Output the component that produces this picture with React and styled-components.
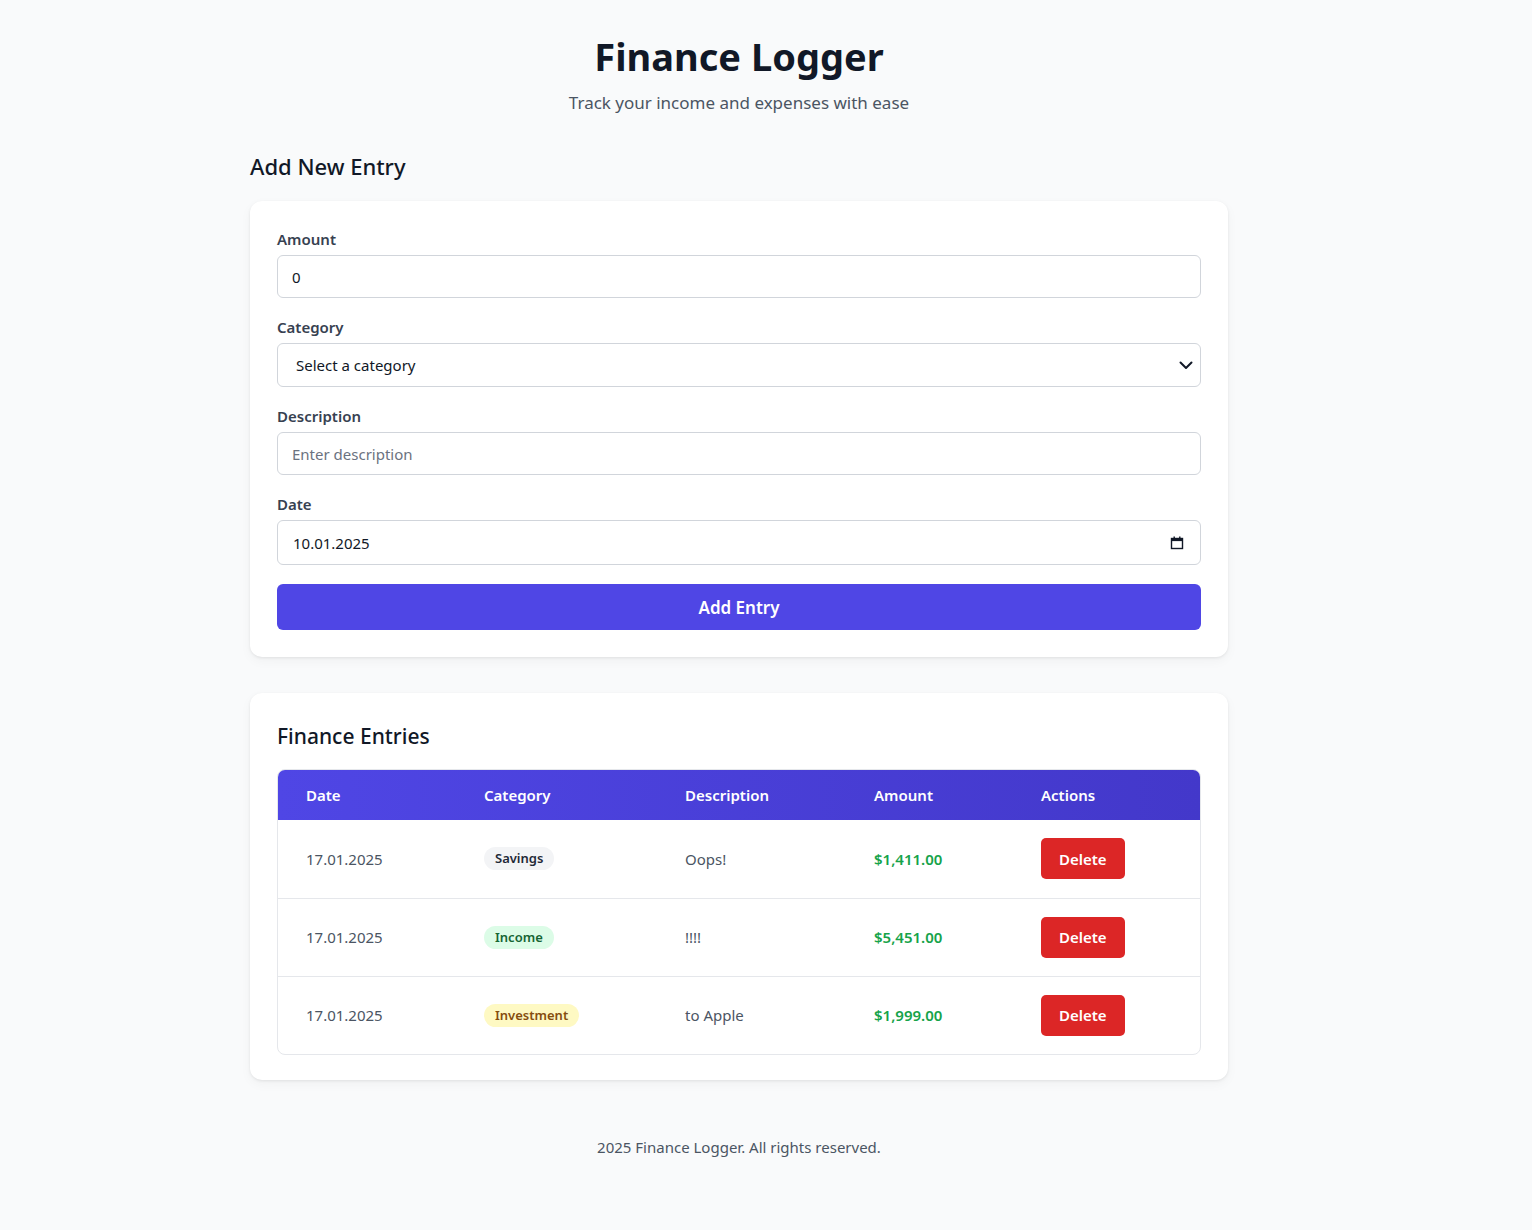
import React from 'react';
import styled, { createGlobalStyle } from 'styled-components';

const GlobalStyle = createGlobalStyle`
  html, body {
    margin: 0;
    padding: 0;
    background: #f9fafb;
    font-family: "Noto Sans", "Open Sans", sans-serif;
    color: #111827;
  }
  * { box-sizing: border-box; }
`;

const Page = styled.div`
  width: 1478px;
  min-height: 1230px;
  padding: 28px 0 60px;
`;

const Container = styled.div`
  width: 978px;
  margin: 0 auto;
`;

const Header = styled.header`
  text-align: center;
  margin-bottom: 36px;
`;

const Title = styled.h1`
  margin: 0;
  font-size: 38px;
  font-weight: 700;
  line-height: 56px;
  color: #111827;
`;

const Subtitle = styled.p`
  margin: 7px 0 0;
  font-size: 17px;
  color: #4b5563;
`;

const SectionTitle = styled.h2`
  margin: 0 0 ${p => p.$gap || 18}px;
  font-size: ${p => p.$size || 22}px;
  font-weight: 500;
  line-height: 32px;
  color: #111827;
`;

const Card = styled.section`
  background: #fff;
  border-radius: 12px;
  box-shadow: 0 1px 3px rgba(0,0,0,0.08), 0 4px 12px rgba(0,0,0,0.04);
  padding: ${p => p.$pad || '27px'};
  margin-bottom: 36px;
`;

const Field = styled.div`
  margin-bottom: 19px;
`;

const Label = styled.label`
  display: block;
  font-size: 15px;
  font-weight: 600;
  color: #374151;
  margin-bottom: 6px;
  line-height: 20px;
`;

const InputWrap = styled.div`
  position: relative;
`;

const Input = styled.input`
  display: block;
  width: 100%;
  height: ${p => p.$h || 43}px;
  padding: 0 ${p => p.$padL || 14}px;
  border: 1px solid #d1d5db;
  border-radius: 6px;
  font: inherit;
  font-size: 15px;
  color: #111827;
  background: #fff;
  outline: none;
  &::placeholder { color: #6b7280; }
`;

const Select = styled.select`
  display: block;
  width: 100%;
  height: 44px;
  padding: 0 18px;
  border: 1px solid #d1d5db;
  border-radius: 6px;
  font: inherit;
  font-size: 15px;
  color: #111827;
  background: #fff;
  appearance: none;
  outline: none;
`;

const FieldIcon = styled.span`
  position: absolute;
  right: ${p => p.$right || 16}px;
  top: 50%;
  transform: translateY(-50%);
  display: flex;
  pointer-events: none;
`;

const PrimaryButton = styled.button`
  display: block;
  width: 100%;
  height: 46px;
  border: none;
  border-radius: 6px;
  background: #4f46e5;
  color: #fff;
  font: inherit;
  font-size: 17px;
  font-weight: 600;
  cursor: pointer;
`;

const TableBox = styled.div`
  border: 1px solid #e5e7eb;
  border-radius: 8px;
  overflow: hidden;
`;

const Table = styled.table`
  width: 100%;
  border-collapse: collapse;
  table-layout: fixed;
`;

const Col = styled.col`
  width: ${p => p.$w}px;
`;

const HeadRow = styled.tr`
  background: linear-gradient(90deg, #4f46e5, #4338ca);
`;

const Th = styled.th`
  text-align: left;
  height: 50px;
  padding: 0 28px;
  color: #fff;
  font-size: 15px;
  font-weight: 600;
`;

const Row = styled.tr`
  & + & td { border-top: 1px solid #e5e7eb; }
`;

const Td = styled.td`
  height: 78px;
  padding: 0 28px;
  font-size: 15px;
  color: ${p => p.$color || '#4b5563'};
  font-weight: ${p => p.$weight || 400};
`;

const badgeColors = {
  Savings: ['#f3f4f6', '#1f2937'],
  Income: ['#dcfce7', '#166534'],
  Investment: ['#fef9c3', '#854d0e'],
};

const Badge = styled.span`
  display: inline-block;
  padding: 2px 11px;
  border-radius: 999px;
  font-size: 13px;
  font-weight: 600;
  line-height: 19px;
  background: ${p => badgeColors[p.$kind][0]};
  color: ${p => badgeColors[p.$kind][1]};
`;

const DeleteButton = styled.button`
  height: 41px;
  padding: 0 18px;
  border: none;
  border-radius: 5px;
  background: #dc2626;
  color: #fff;
  font: inherit;
  font-size: 15px;
  font-weight: 600;
  cursor: pointer;
`;

const Footer = styled.footer`
  text-align: center;
  font-size: 15px;
  color: #4b5563;
  margin-top: 57px;
`;

const columns = [
  ['Date', 178],
  ['Category', 201],
  ['Description', 189],
  ['Amount', 167],
  ['Actions', 188],
];

const entries = [
  { date: '17.01.2025', category: 'Savings', description: 'Oops!', amount: '$1,411.00' },
  { date: '17.01.2025', category: 'Income', description: '!!!!', amount: '$5,451.00' },
  { date: '17.01.2025', category: 'Investment', description: 'to Apple', amount: '$1,999.00' },
];

const Chevron = () => (
  <svg width="16" height="16" viewBox="0 0 16 16" fill="none">
    <path d="M2.5 5.5 L8 11 L13.5 5.5" stroke="#111827" strokeWidth="2" strokeLinecap="round" strokeLinejoin="round" />
  </svg>
);

const CalendarIcon = () => (
  <svg width="14" height="14" viewBox="0 0 14 14" fill="none">
    <rect x="1.5" y="2.5" width="11" height="10" stroke="#111827" strokeWidth="1.4" fill="none" />
    <rect x="1.5" y="2.5" width="11" height="2.6" fill="#111827" />
    <rect x="3.5" y="0.5" width="1.4" height="2.5" fill="#111827" />
    <rect x="9.1" y="0.5" width="1.4" height="2.5" fill="#111827" />
  </svg>
);

export default function App() {
  return (
    <Page>
      <GlobalStyle />
      <Container>
        <Header>
          <Title>Finance Logger</Title>
          <Subtitle>Track your income and expenses with ease</Subtitle>
        </Header>

        <SectionTitle $gap={19}>Add New Entry</SectionTitle>
        <Card $pad="28px 27px 27px">
          <Field>
            <Label>Amount</Label>
            <Input type="text" defaultValue="0" />
          </Field>
          <Field>
            <Label>Category</Label>
            <InputWrap>
              <Select defaultValue="">
                <option value="">Select a category</option>
                <option>Income</option>
                <option>Savings</option>
                <option>Investment</option>
              </Select>
              <FieldIcon $right={7}><Chevron /></FieldIcon>
            </InputWrap>
          </Field>
          <Field>
            <Label>Description</Label>
            <Input type="text" placeholder="Enter description" />
          </Field>
          <Field>
            <Label>Date</Label>
            <InputWrap>
              <Input type="text" $h={45} $padL={15} defaultValue="10.01.2025" />
              <FieldIcon $right={17}><CalendarIcon /></FieldIcon>
            </InputWrap>
          </Field>
          <PrimaryButton>Add Entry</PrimaryButton>
        </Card>

        <Card $pad="27px 27px 25px">
          <SectionTitle $size={21} $gap={17}>Finance Entries</SectionTitle>
          <TableBox>
            <Table>
              <colgroup>
                {columns.map(([name, w]) => <Col key={name} $w={w} />)}
              </colgroup>
              <thead>
                <HeadRow>
                  {columns.map(([name]) => <Th key={name}>{name}</Th>)}
                </HeadRow>
              </thead>
              <tbody>
                {entries.map((e, i) => (
                  <Row key={i}>
                    <Td>{e.date}</Td>
                    <Td><Badge $kind={e.category}>{e.category}</Badge></Td>
                    <Td>{e.description}</Td>
                    <Td $color="#16a34a" $weight={600}>{e.amount}</Td>
                    <Td><DeleteButton>Delete</DeleteButton></Td>
                  </Row>
                ))}
              </tbody>
            </Table>
          </TableBox>
        </Card>

        <Footer>2025 Finance Logger. All rights reserved.</Footer>
      </Container>
    </Page>
  );
}
